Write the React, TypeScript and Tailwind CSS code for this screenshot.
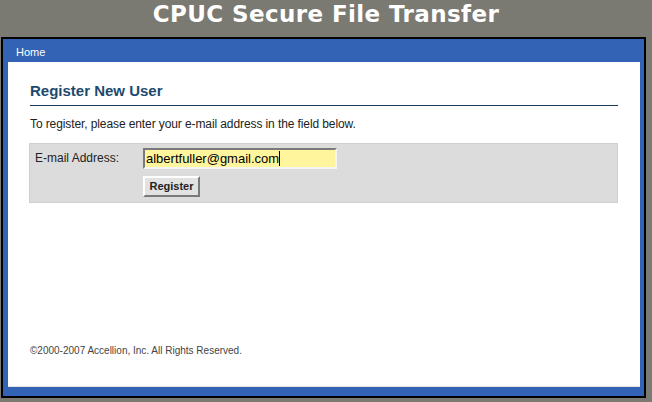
import React from 'react';

const App: React.FC = () => {
  return (
    <div className="w-[652px] h-[402px] overflow-hidden bg-[#7b7a72] font-['Liberation_Sans',Arial,sans-serif]">
      {/* page banner */}
      <h1 className="h-[37px] text-center text-white font-bold text-[23px] leading-[28px] [letter-spacing:0.4px] font-['DejaVu_Sans',sans-serif]">
        CPUC Secure File Transfer
      </h1>

      {/* blue frame */}
      <div className="ml-[1px] w-[645px] h-[361px] border-2 border-black bg-[#3263b5] flex flex-col">
        <div className="h-[23px] pl-[13px] pt-[6px] text-[11px] leading-[14px] text-white">Home</div>

        <div className="ml-[5px] mr-[4px] h-[325px] bg-white border-b border-[#e6e6e6] px-[22px] flex flex-col">
          <h2 className="mt-[18px] pb-[3px] leading-[22px] text-[15px] font-bold text-[#1d4a6e] border-b border-[#1b3d5a]">
            Register New User
          </h2>

          <p className="mt-[10px] text-[12px] leading-[16px] tracking-[-0.1px] text-[#222]">
            To register, please enter your e-mail address in the field below.
          </p>

          <div className="mt-[11px] -ml-[1px] h-[60px] bg-[#dcdcdc] border border-[#cfcfcf] pl-[5px] pt-[4px] grid grid-cols-[108px_auto] gap-y-[7px] content-start">
            <label className="text-[12px] leading-[21px] text-[#222]">E-mail Address:</label>
            <div className="w-[194px] h-[21px] bg-[#fff59c] border-2 border-t-[#7a7a7a] border-l-[#7a7a7a] border-r-[#f4f4f4] border-b-[#f4f4f4] flex items-center pl-[1px] text-[13px] text-black">
              <span>albertfuller@gmail.com</span>
              <span className="w-px h-[15px] bg-black" />
            </div>
            <div />
            <button className="w-[57px] h-[21px] bg-[#e2e2e2] border-2 border-t-white border-l-white border-r-[#7a7a7a] border-b-[#7a7a7a] text-[11px] font-bold text-[#222]">
              Register
            </button>
          </div>

          <div className="mt-auto pb-[29px] text-[10px] leading-[12px] text-[#444]">
            ©2000-2007 Accellion, Inc. All Rights Reserved.
          </div>
        </div>
      </div>
    </div>
  );
};

export default App;
